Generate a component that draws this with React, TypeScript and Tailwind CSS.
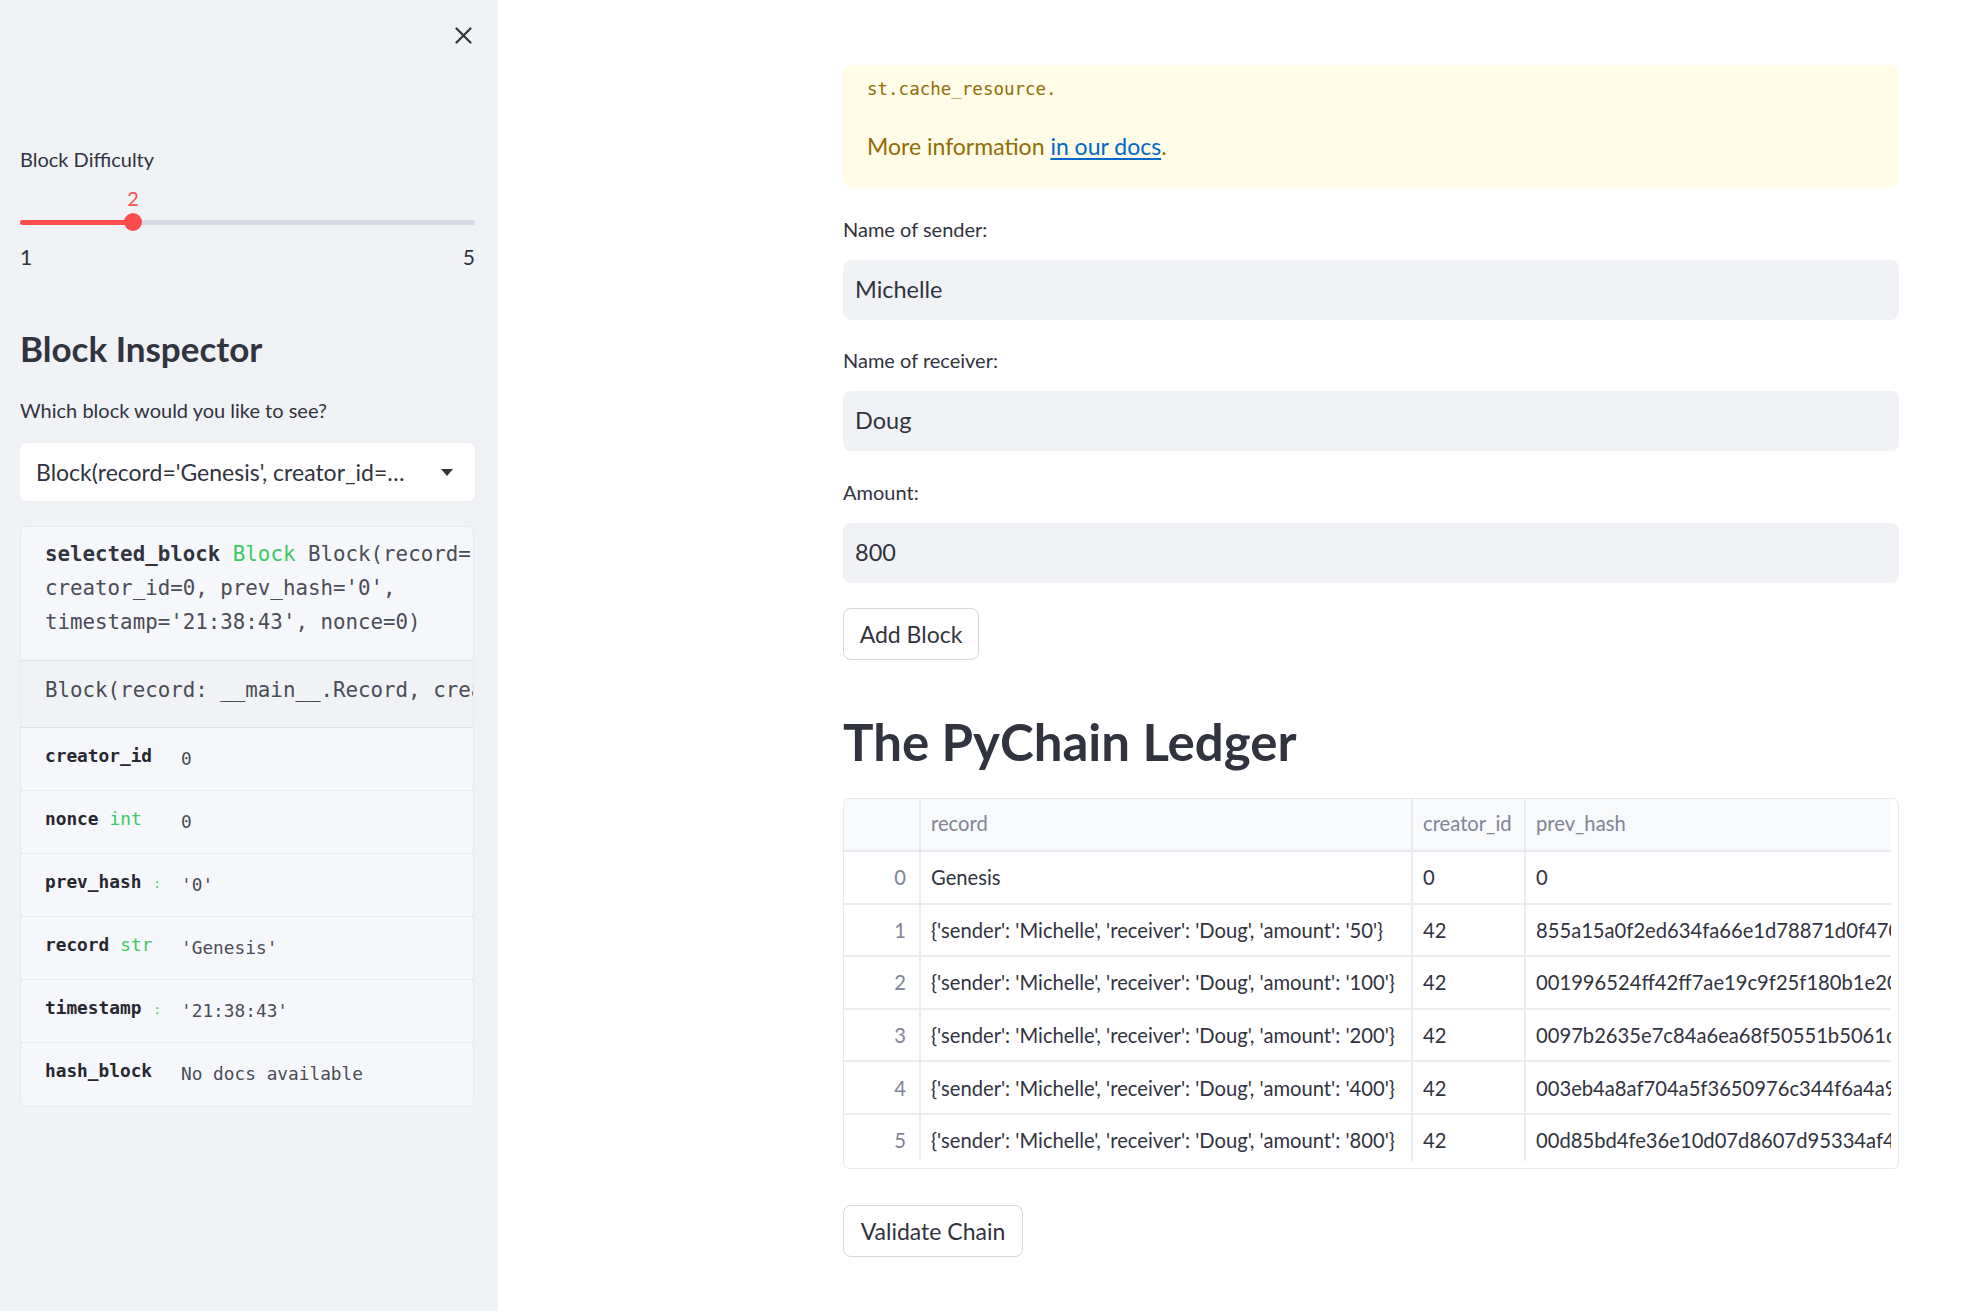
const rows = [
  { i: 0, record: "Genesis", creator: "0", hash: "0" },
  { i: 1, record: "{'sender': 'Michelle', 'receiver': 'Doug', 'amount': '50'}", creator: "42", hash: "855a15a0f2ed634fa66e1d78871d0f4704c9e1b3a7" },
  { i: 2, record: "{'sender': 'Michelle', 'receiver': 'Doug', 'amount': '100'}", creator: "42", hash: "001996524ff42ff7ae19c9f25f180b1e20229d4c8e" },
  { i: 3, record: "{'sender': 'Michelle', 'receiver': 'Doug', 'amount': '200'}", creator: "42", hash: "0097b2635e7c84a6ea68f50551b5061d8a3f20c7b1" },
  { i: 4, record: "{'sender': 'Michelle', 'receiver': 'Doug', 'amount': '400'}", creator: "42", hash: "003eb4a8af704a5f3650976c344f6a4a920e5b17d4" },
  { i: 5, record: "{'sender': 'Michelle', 'receiver': 'Doug', 'amount': '800'}", creator: "42", hash: "00d85bd4fe36e10d07d8607d95334af4c27a9e0f61" },
];

const attrs = [
  { name: "creator_id", type: "", value: "0" },
  { name: "nonce", type: "int", value: "0" },
  { name: "prev_hash", type: ":", value: "'0'" },
  { name: "record", type: "str", value: "'Genesis'" },
  { name: "timestamp", type: ":", value: "'21:38:43'" },
  { name: "hash_block", type: "", value: "No docs available" },
];

function Sidebar() {
  return (
    <aside className="w-[498px] shrink-0 bg-[#f0f2f6] pl-5 pr-[23px]">
      {/* close */}
      <div className="flex h-[145px] justify-end pt-[27px] pr-[3px]">
        <svg width="17" height="17" viewBox="0 0 17 17" className="text-[#31333f]">
          <path d="M1.5 1.5L15.5 15.5M15.5 1.5L1.5 15.5" stroke="currentColor" strokeWidth="2.2" strokeLinecap="round" />
        </svg>
      </div>

      <div className="text-[20px] leading-[29px]">Block Difficulty</div>

      {/* slider */}
      <div className="relative h-[100px]">
        <div className="absolute left-[113px] top-[12px] -translate-x-1/2 text-[20px] leading-[24px] text-[#ff4b4b]">2</div>
        <div className="absolute left-0 right-0 top-[46px] h-[5px] rounded-full bg-[#d5dae5]" />
        <div className="absolute left-0 top-[46px] h-[5px] w-[113px] rounded-full bg-[#ff4b4b]" />
        <div className="absolute left-[104px] top-[39px] h-[18px] w-[18px] rounded-full bg-[#ff4b4b]" />
        <div className="flex justify-between pt-[68px] text-[21px] leading-[29px]">
          <span>1</span>
          <span>5</span>
        </div>
      </div>

      <h2 className="mt-[53px] text-[35px] font-bold leading-[43px]">Block Inspector</h2>

      <div className="mt-[26px] text-[20px] leading-[29px]">Which block would you like to see?</div>

      <div className="mt-[18px] flex h-[58px] items-center justify-between rounded-[7px] bg-white pl-4 pr-[22px]">
        <span className="text-[23px]">Block(record='Genesis', creator_id=…</span>
        <svg width="12" height="7" viewBox="0 0 12 7">
          <path d="M0 0H12L6 7Z" fill="#31333f" />
        </svg>
      </div>

      {/* help box */}
      <div className="mt-[25px] w-[454px] overflow-hidden rounded-[6px] border border-[#e6e9ef] bg-[#f6f7fa] font-['DejaVu_Sans_Mono',monospace]">
        <div className="whitespace-nowrap pb-[21px] pl-6 pt-[10px] text-[20.8px] leading-[34px] text-[#31333f]">
          <div>
            <span className="font-bold">selected_block</span> <span className="text-[#3cc864]">Block</span>{" "}
            <span className="text-[#4a4c57]">Block(record='Genesis',</span>
          </div>
          <div className="text-[#4a4c57]">creator_id=0, prev_hash='0',</div>
          <div className="text-[#4a4c57]">timestamp='21:38:43', nonce=0)</div>
        </div>
        <div className="h-[68px] whitespace-nowrap border-y border-[#e0e3ea] bg-[#f0f2f6] pl-6 pt-[12px] text-[20.8px] leading-[34px] text-[#4a4c57]">
          Block(record: __main__.Record, creator_id: int, prev_hash: str)
        </div>
        {attrs.map((a, idx) => (
          <div
            key={a.name}
            className={`flex h-[63px] items-start pl-6 pt-[16px] text-[17.8px] leading-[24px] ${
              idx < attrs.length - 1 ? "border-b border-dotted border-[#d8dbe2]" : ""
            }`}
          >
            <div className="w-[136px] shrink-0 whitespace-nowrap">
              <span className="font-bold text-[#262730]">{a.name}</span>
              {a.type === ":" ? (
                <span className="ml-3 text-[13px] text-[#3cc864]">:</span>
              ) : a.type ? (
                <span className="ml-[11px] text-[#3cc864]">{a.type}</span>
              ) : null}
            </div>
            <div className="mt-[3px] whitespace-nowrap text-[#4a4c57]">{a.value}</div>
          </div>
        ))}
      </div>
    </aside>
  );
}

function Field({ label, value, mt }: { label: string; value: string; mt: string }) {
  return (
    <div>
      <div className={`${mt} text-[20px] leading-[29px]`}>{label}</div>
      <div className="mt-[16px] flex h-[60px] items-center rounded-[8px] bg-[#f0f2f6] pl-3 text-[23.5px]">{value}</div>
    </div>
  );
}

function Ledger() {
  const cols = "grid grid-cols-[77px_492px_113px_1fr]";
  return (
    <div className="mt-[24px] h-[371px] w-[1056px] overflow-hidden rounded-[6px] border border-[#e6e9ef] pb-[7px] pr-[7px] text-[20.2px]">
      <div className="h-full overflow-hidden">
        <div className={`${cols} h-[53px] border-b-2 border-[#e8eaef] bg-[#f8f9fb] text-[#808495]`}>
          <div className="border-r-2 border-[#e8eaef]" />
          <div className="flex items-center border-r-2 border-[#e8eaef] pb-[2px] pl-[10px]">record</div>
          <div className="flex items-center border-r-2 border-[#e8eaef] pb-[2px] pl-[10px]">creator_id</div>
          <div className="flex items-center pb-[2px] pl-[10px]">prev_hash</div>
        </div>
        {rows.map((r) => (
          <div key={r.i} className={`${cols} h-[52.6px] border-b-2 border-[#ebedf1]`}>
            <div className="flex items-center justify-end border-r-2 border-[#ebedf1] pr-[13px] text-[#808495]">{r.i}</div>
            <div className="flex items-center whitespace-nowrap border-r-2 border-[#ebedf1] pl-[10px]">{r.record}</div>
            <div className="flex items-center border-r-2 border-[#ebedf1] pl-[10px]">{r.creator}</div>
            <div className="flex items-center overflow-hidden whitespace-nowrap pl-[10px]">{r.hash}</div>
          </div>
        ))}
      </div>
    </div>
  );
}

function Button({ children, w, mt }: { children: string; w: string; mt: string }) {
  return (
    <button className={`${mt} ${w} flex h-[52px] items-center justify-center rounded-[8px] border border-[#d5d7de] bg-white text-[23px] text-[#31333f]`}>
      {children}
    </button>
  );
}

export default function App() {
  return (
    <div className="flex h-[1311px] w-[1978px] overflow-hidden bg-white font-['Lato','Noto_Sans',sans-serif] text-[#31333f]">
      <Sidebar />
      <main className="flex-1 pl-[345px]">
        <div className="mt-[65px] h-[123px] w-[1056px] rounded-[8px] bg-[#fffce7] pl-6 pt-[12px] text-[#926c05]">
          <div className="font-['DejaVu_Sans_Mono',monospace] text-[17.5px] leading-[24px]">st.cache_resource.</div>
          <div className="mt-[27px] text-[23px] leading-[36px]">
            More information{" "}
            <a className="text-[#0068c9] underline underline-offset-[3px]" href="#">
              in our docs
            </a>
            .
          </div>
        </div>
        <div className="w-[1056px]">
          <Field label="Name of sender:" value="Michelle" mt="mt-[27px]" />
          <Field label="Name of receiver:" value="Doug" mt="mt-[26px]" />
          <Field label="Amount:" value="800" mt="mt-[27px]" />
        </div>
        <Button w="w-[136px]" mt="mt-[25px]">Add Block</Button>
        <h1 className="mt-[49px] text-[51px] font-bold leading-[65px]">The PyChain Ledger</h1>
        <Ledger />
        <Button w="w-[180px]" mt="mt-[36px]">Validate Chain</Button>
      </main>
    </div>
  );
}
